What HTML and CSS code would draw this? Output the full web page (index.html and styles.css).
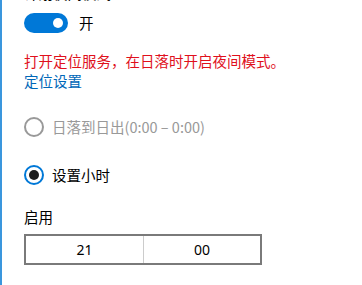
FILE: index.html
```html
<!DOCTYPE html>
<html lang="zh-CN">
<head>
<meta charset="utf-8">
<link rel="stylesheet" href="styles.css">
</head>
<body>
<div class="pane">
  <div class="label top">计划夜间模式</div>
  <div class="toggle-row">
    <span class="toggle"><span class="knob"></span></span>
    <span class="toggle-text">开</span>
  </div>
  <div class="warn">打开定位服务，在日落时开启夜间模式。</div>
  <a class="link" href="#">定位设置</a>
  <div class="radio disabled r1"><span class="dot"></span><span>日落到日出(0:00 – 0:00)</span></div>
  <div class="radio checked r2"><span class="dot"></span><span>设置小时</span></div>
  <div class="label on">启用</div>
  <div class="timebox">
    <div class="cell">21</div>
    <div class="cell">00</div>
  </div>
</div>
</body>
</html>
```
FILE: styles.css
```css
html, body {
  margin: 0;
  padding: 0;
  background: #fff;
  overflow: hidden;
}
.pane {
  height: 285px;
  border-left: 2px solid #3a96dd;
  padding-left: 22px;
  font-family: "Noto Sans CJK SC", "Noto Sans", sans-serif;
  font-size: 14.5px;
  line-height: 20px;
  color: #000;
  display: flex;
  flex-direction: column;
  align-items: flex-start;
}
.label.top {
  margin-top: -17px;
  margin-bottom: 2px;
}
.toggle-row {
  margin-top: 8px;
  display: flex;
  align-items: center;
  height: 20px;
}
.toggle {
  width: 44px;
  height: 20px;
  border-radius: 10px;
  background: #0078d7;
  display: flex;
  align-items: center;
  justify-content: flex-end;
  padding-right: 5px;
  box-sizing: border-box;
}
.knob {
  width: 10px;
  height: 10px;
  border-radius: 50%;
  background: #fff;
}
.toggle-text {
  margin-left: 11px;
}
.warn {
  margin-top: 18px;
  color: #e0101c;
}
.link {
  color: #0067b8;
  text-decoration: none;
}
.radio {
  display: flex;
  align-items: center;
  height: 20px;
}
.radio .dot {
  width: 20px;
  height: 20px;
  box-sizing: border-box;
  border-radius: 50%;
  border: 2px solid #999;
  margin-right: 8px;
  display: flex;
  align-items: center;
  justify-content: center;
}
.r1 {
  margin-top: 26px;
  color: #999;
}
.r2 {
  margin-top: 28px;
}
.radio.checked .dot {
  border-color: #0078d7;
}
.radio.checked .dot::after {
  content: "";
  width: 10px;
  height: 10px;
  border-radius: 50%;
  background: #1a1a1a;
}
.label.on {
  margin-top: 22px;
}
.timebox {
  margin-top: 7px;
  width: 238px;
  height: 31px;
  box-sizing: border-box;
  border: 2px solid #7a7a7a;
  display: grid;
  grid-template-columns: 1fr 1fr;
}
.cell {
  display: flex;
  align-items: center;
  justify-content: center;
  font-family: "Noto Sans", "Noto Sans CJK SC", sans-serif;
  font-size: 14px;
}
.cell + .cell {
  border-left: 1px solid #ccc;
}
```
